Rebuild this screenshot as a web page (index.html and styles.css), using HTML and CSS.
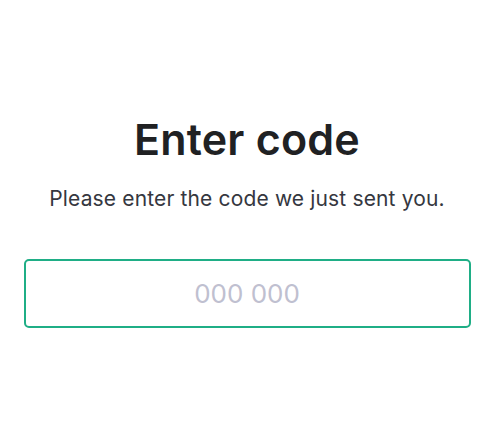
FILE: index.html
```html
<!DOCTYPE html>
<html lang="en">
<head>
<meta charset="utf-8">
<title>Enter code</title>
<link rel="stylesheet" href="styles.css">
</head>
<body>
<main class="page">
  <h1 class="title">Enter code</h1>
  <p class="subtitle">Please enter the code we just sent you.</p>
  <input class="code-input" type="text" placeholder="000 000" inputmode="numeric">
</main>
</body>
</html>
```
FILE: styles.css
```css
html, body {
  margin: 0;
  padding: 0;
  background: #ffffff;
}
body {
  font-family: Inter, "Noto Sans", "Liberation Sans", sans-serif;
  color: #2d333a;
}
.page {
  display: flex;
  flex-direction: column;
  align-items: center;
  padding: 110px 30px 0 24px;
}
.title {
  margin: 0;
  font-size: 43px;
  font-weight: 600;
  color: #202123;
  line-height: 58px;
  letter-spacing: 0.2px;
}
.subtitle {
  margin: 16px 0 0;
  font-size: 21px;
  line-height: 30px;
  color: #353740;
  letter-spacing: 0.15px;
}
.code-input {
  box-sizing: border-box;
  width: 447px;
  height: 69px;
  margin-top: 45px;
  border: 2px solid #1fae86;
  border-radius: 5px;
  outline: none;
  text-align: center;
  font-family: Inter, "Noto Sans", sans-serif;
  font-size: 26px;
  color: #2d333a;
  background: #fff;
}
.code-input::placeholder {
  color: #bfc0d0;
}
```
